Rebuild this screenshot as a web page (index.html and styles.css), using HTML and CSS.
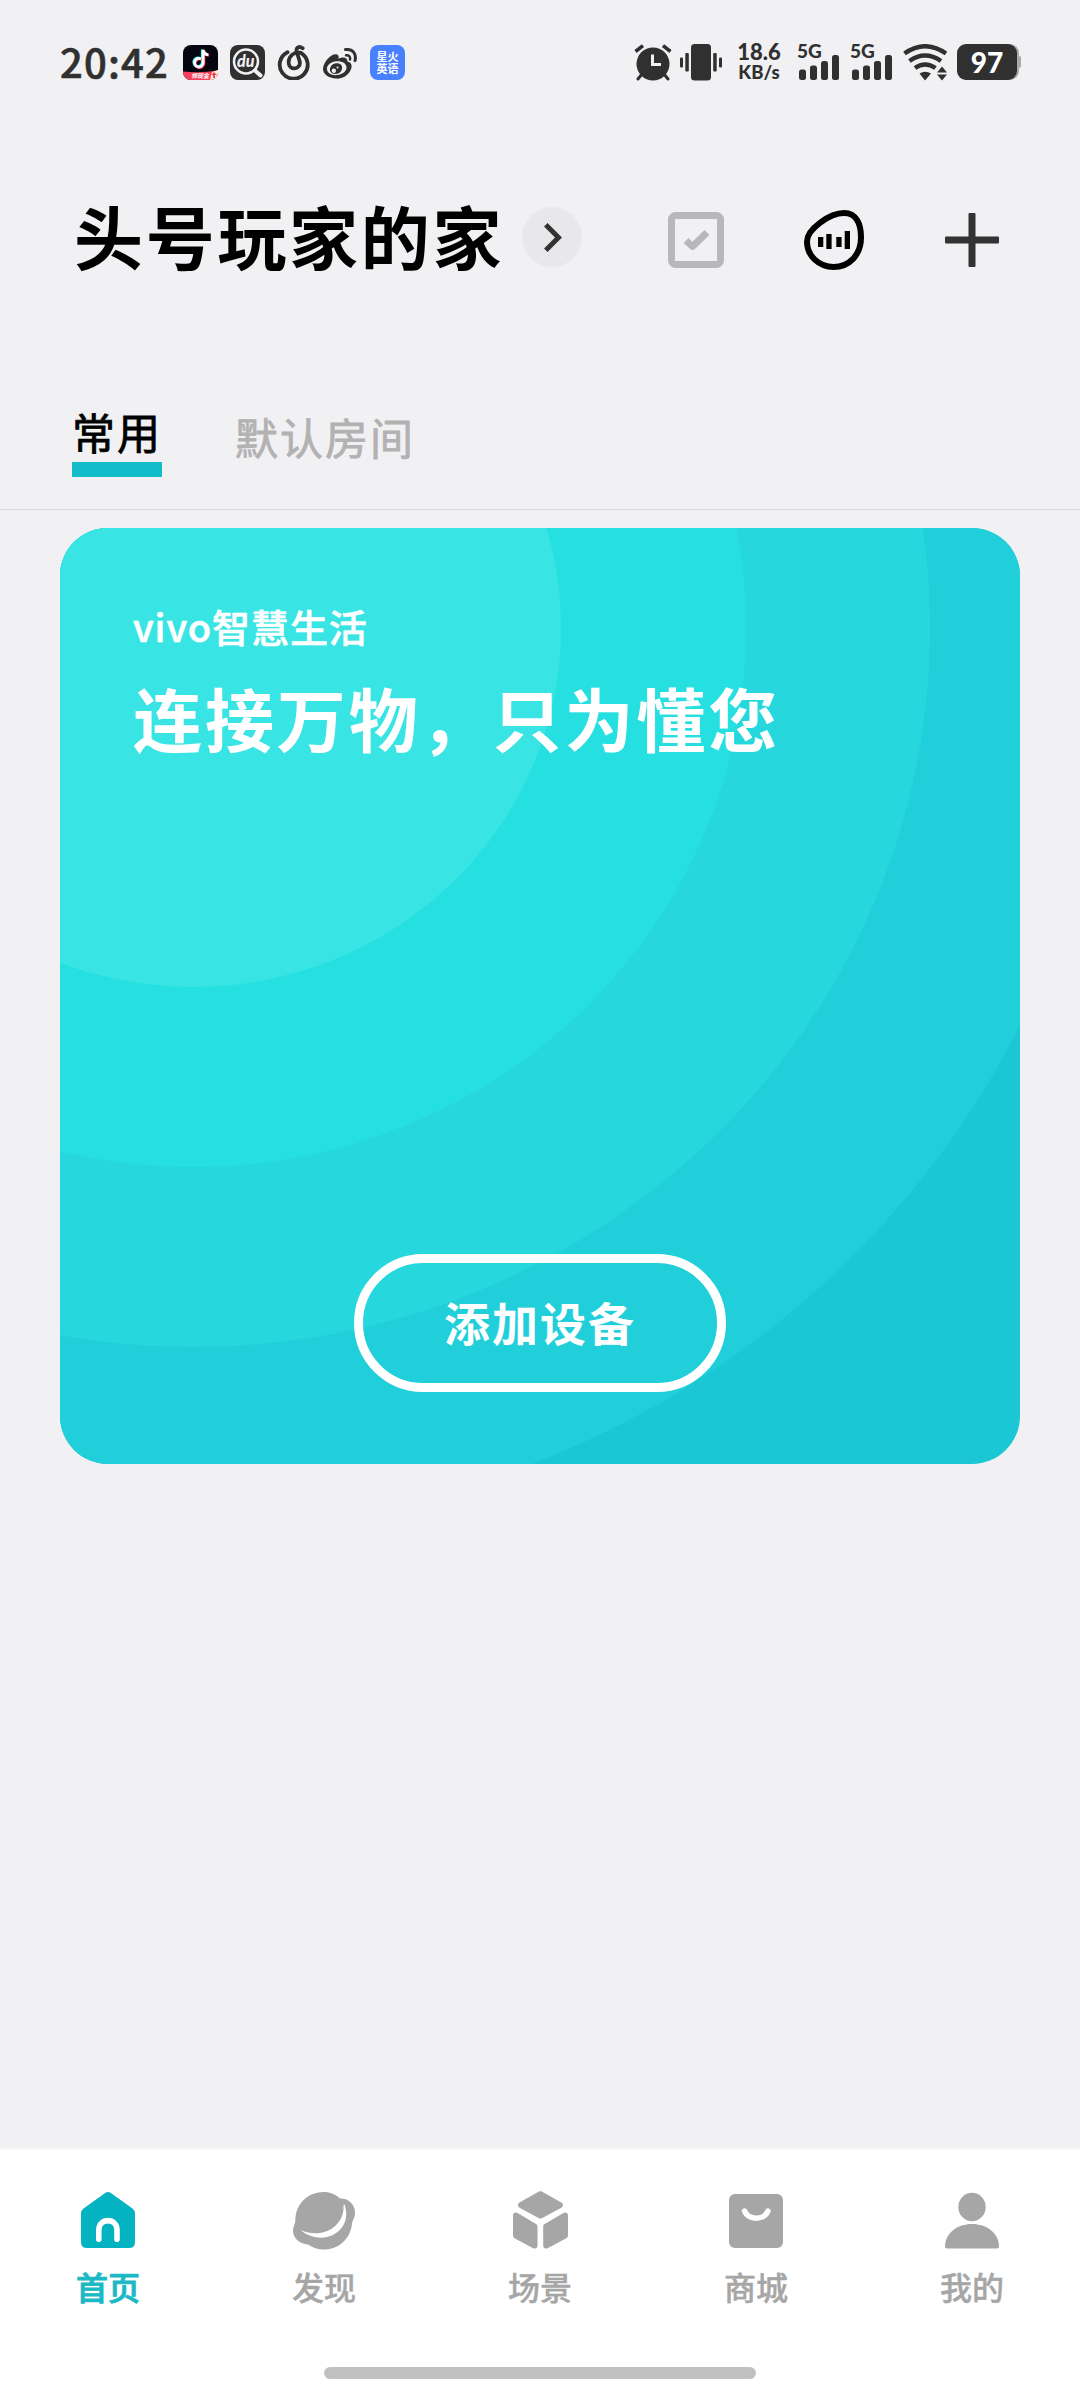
FILE: index.html
```
<!DOCTYPE html>
<html lang="zh-CN">
<head>
  <meta charset="UTF-8" />
  <meta name="viewport" content="width=device-width, initial-scale=1.0" />
  <title>智慧生活</title>
  <link rel="stylesheet" href="styles.css">
</head>
<body>
  <div class="screen">
    <div class="status-bar">
      <span class="clock">20:42</span>
      <div class="notifications">
        <div class="app-icon tiktok">
          <svg width="35" height="35" viewBox="0 0 35 35">
            <g fill="none" stroke-width="2.8">
              <path stroke="#25f4ee" d="M17.2 13.4a4.3 4.3 0 1 0 2.1 4V4.6c.5 3 2.5 4.6 5.2 4.8" />
              <path stroke="#fe2c55" d="M18.8 14.6a4.3 4.3 0 1 0 2.1 4V5.4c.5 3 2.5 4.6 5.2 4.8" />
              <path stroke="#fff" d="M18 14a4.3 4.3 0 1 0 2.1 4V5c.5 3 2.5 4.6 5.2 4.8" />
            </g>
            <path fill="#f8405a" d="M0 26.5q17 2 35-1V35H0z" />
            <path fill="#fff0d8" d="M29 27l6-2v7l-3 3h-5z" />
            <path fill="#f8405a" d="M31 27l3 3h-2v3h-2v-3h-2z" />
          </svg>
          <span class="promo">领现金</span>
        </div>
        <div class="app-icon baidu">
          <svg width="35" height="35" viewBox="0 0 35 35">
            <g fill="none" stroke="#f1f1f4">
              <circle cx="16" cy="16.5" r="12" stroke-width="2.5" />
              <path d="M25 25.5l5.5 5" stroke-width="4" stroke-linecap="round" />
            </g>
          </svg>
          <span class="du">du</span>
        </div>
        <svg width="35" height="35" viewBox="0 0 35 35">
          <path fill="none" stroke="#303030" stroke-width="3.8" stroke-linecap="round" d="M10.500 7.200A14 14 0 1 0 24 7.800C17.500 6 11.200 11 11.700 18.200a5.600 5.600 0 0 0 11.200-.7C22.500 14 20.300 10 19.600 5.800 19.200 2 22.500 1 25.700 3.200" />
        </svg>
        <svg class="weibo" width="36" height="35" viewBox="0 0 36 35">
          <path fill="#303030" fill-rule="evenodd" d="M15 9.500c2 .6 2 2.500 1.300 4.300 4.200-1.800 9-2.200 9.200 2.800 3.700 1 5 3.500 3.600 7.500C26.500 31 20 34 14 33.600 6.500 33 .8 29.500 1 23.600 1.300 16.500 10.500 7.500 15 9.500zM14.500 16.200c-6 .4-9.900 4.200-9.500 8 .3 4 4.600 6.300 10 5.900 5.900-.5 9.900-4.100 9.500-8-.4-4.100-4.700-6.200-10-5.900z" />
          <path fill="#303030" fill-rule="evenodd" d="M14.800 18.200c3.900 0 6 2.400 5.200 5.700-.8 3.400-3.600 5.200-6.900 5.100-3.700-.1-5.700-2.300-5.100-5.400.6-3.200 3.300-5.400 6.800-5.400zM11.800 23.500a2.200 2.200 0 1 0 .1 4.400 2.200 2.200 0 0 0-.1-4.400zM15.500 21.600a1 1 0 1 0 0 2 1 1 0 0 0 0-2z" />
          <g fill="none" stroke="#303030" stroke-width="3" stroke-linecap="round">
            <path d="M23.500 4.600c7-1.200 11.300 4.200 9.500 11" />
            <path d="M24 10.300c3-.4 4.700 1.500 4 4.200" stroke-width="2.500" />
          </g>
        </svg>
        <div class="app-icon spark">
          <span>星火</span>
          <span>英语</span>
        </div>
      </div>
      <div class="system">
        <svg width="38" height="37" viewBox="0 0 38 37">
          <g fill="none" stroke="#303030" stroke-width="3.600">
            <path d="M1.500 7.500 9 1.700M29 1.700l7.500 5.800" />
            <path d="M8 30l-4 5M30 30l4 5" stroke-linecap="round" stroke-width="3" />
          </g>
          <circle cx="19" cy="20" r="16.500" fill="#303030" />
          <path d="M18.500 10.500v10h8.500" fill="none" stroke="#f1f1f4" stroke-width="3" />
        </svg>
        <svg class="vibrate" width="42" height="37" viewBox="0 0 42 37" fill="#303030">
          <rect x="11" y="0" width="20" height="36.500" rx="3.500" />
          <rect x="5.300" y="9" width="3.500" height="18.500" rx="1" />
          <rect x="0" y="13.500" width="3" height="10" rx="1" />
          <rect x="33.200" y="9" width="3.500" height="18.500" rx="1" />
          <rect x="39" y="13.500" width="3" height="10" rx="1" />
        </svg>
        <div class="speed">
          <span class="rate">18.6</span>
          <span class="unit">KB/s</span>
        </div>
        <div class="signal">
          <span class="net">5G</span>
          <svg width="41" height="25" viewBox="0 0 41 25" fill="#303030">
            <rect x="0" y="14.500" width="7" height="10.500" rx="2.500" />
            <rect x="11" y="10.500" width="7" height="14.500" rx="2.500" />
            <rect x="22" y="6" width="7" height="19" rx="2.500" />
            <rect x="33" y="0" width="7" height="25" rx="2.500" />
          </svg>
        </div>
        <div class="signal">
          <span class="net">5G</span>
          <svg width="41" height="25" viewBox="0 0 41 25" fill="#303030">
            <rect x="0" y="14.500" width="7" height="10.500" rx="2.500" />
            <rect x="11" y="10.500" width="7" height="14.500" rx="2.500" />
            <rect x="22" y="6" width="7" height="19" rx="2.500" />
            <rect x="33" y="0" width="7" height="25" rx="2.500" />
          </svg>
        </div>
        <svg class="wifi" width="45" height="37" viewBox="0 0 45 37">
          <g fill="none" stroke="#303030" stroke-width="4.500">
            <path d="M1.500 9.500Q22 -5 43 9.500" />
            <path d="M6.500 17Q22 6 38 17" />
            <path d="M12 24Q22 17 32.500 24" />
          </g>
          <path fill="#303030" d="M16.500 29.500q5.700-3.500 11.500 0L22 36.500zM34 28.500l5-6 5 6zM34 30.500h10l-5 6z" />
        </svg>
        <div class="battery"><span class="level">97</span></div>
      </div>
    </div>

    <div class="header">
      <h1 class="home-name">头号玩家的家</h1>
      <div class="switch-home">
        <svg width="18" height="29" viewBox="0 0 18 29">
          <path d="M1.800 1.800 14.500 14.500 1.800 27.200" fill="none" stroke="#333" stroke-width="5" />
        </svg>
      </div>
      <div class="actions">
        <svg width="60" height="60" viewBox="0 0 60 60">
          <rect x="5.500" y="5.500" width="49" height="49" rx="4" fill="none" stroke="#b8b8ba" stroke-width="7" />
          <path d="M20 30.500 26.500 36.500 41 22.500" fill="none" stroke="#b8b8ba" stroke-width="7" stroke-linejoin="round" />
        </svg>
        <svg width="60" height="60" viewBox="0 0 60 60">
          <path d="M40 3C53 3 57 15 57 27.500 57 45 45 57 29.500 57 15 57 3 46 3 31.500 3 19 26 3 40 3z" fill="none" stroke="#000" stroke-width="6" />
          <path d="M14 27h5.300v10H14zM22.300 24h5.300v15h-5.300zM32.300 27h5.300v10h-5.300zM40.700 21H46v18h-5.300z" />
        </svg>
        <svg width="60" height="60" viewBox="0 0 60 60" fill="#333">
          <rect x="3" y="26.500" width="54" height="7" rx="1" />
          <rect x="26.500" y="3" width="7" height="54" rx="1" />
        </svg>
      </div>
    </div>

    <div class="tabs">
      <div class="tab active">常用</div>
      <div class="tab">默认房间</div>
    </div>

    <div class="card">
      <svg class="card-bg" width="960" height="936" viewBox="0 0 960 936">
        <rect width="960" height="936" fill="#1bc7d4" />
        <ellipse cx="133" cy="100" rx="922" ry="899" fill="#21cfdb" />
        <ellipse cx="133" cy="100" rx="737" ry="719" fill="#26d8de" />
        <ellipse cx="133" cy="100" rx="553" ry="539" fill="#26dfe0" />
        <ellipse cx="133" cy="100" rx="368" ry="359" fill="#39e5e4" />
      </svg>
      <div class="brand">vivo智慧生活</div>
      <div class="slogan">连接万物，只为懂您</div>
      <div class="add-device">添加设备</div>
    </div>

    <div class="bottom-nav">
      <div class="nav-items">
        <div class="nav-item active">
          <svg width="72" height="72" viewBox="0 0 72 72">
            <path fill="#04b3c1" d="M33.500 8.800Q36 7 38.500 8.800L60.500 24.500Q63 26.500 63 29.500V58q0 6-6 6H15q-6 0-6-6V29.500Q9 26.500 11.500 24.500z" />
            <path fill="none" stroke="#fff" stroke-width="5.600" stroke-linecap="round" d="M26.800 55.300V46c0-12.500 18.200-12.500 18.200 0v9.300" />
          </svg>
          <span>首页</span>
        </div>
        <div class="nav-item">
          <svg width="72" height="72" viewBox="0 0 72 72" fill="#a6a6a6">
            <path d="M36 8C42 8 48 10.500 52 14.500 60 14 67 20 67 28.500 67 34 64.500 36 64 40 62 56 50 65.500 36 65.500 30 65.500 24.500 63.500 20 60.500 11 59.500 5 54 5 47 5 42 7.500 40 7.300 36 8 19 20 8 36 8z" />
            <path fill="#fff" d="M56.500 20.500C66 48 34 64 12.500 46 35 56 57 42 55.500 21z" />
          </svg>
          <span>发现</span>
        </div>
        <div class="nav-item">
          <svg width="72" height="72" viewBox="0 0 72 72">
            <g fill="#a6a6a6" stroke="#a6a6a6" stroke-width="6" stroke-linejoin="round">
              <path d="M36.400 10.200 55.800 21 36.400 31.500 17 21z" />
              <path d="M12 31.500 30.500 42.500V61.500L12 51.500z" />
              <path d="M61 31.500 42.200 42.500V61.500L61 51.500z" />
            </g>
          </svg>
          <span>场景</span>
        </div>
        <div class="nav-item">
          <svg width="72" height="72" viewBox="0 0 72 72">
            <rect x="9" y="10" width="54" height="54" rx="6" fill="#a6a6a6" />
            <path d="M24.500 27C28 36.500 44.500 36.500 48 27" fill="none" stroke="#fff" stroke-width="5.500" stroke-linecap="round" />
          </svg>
          <span>商城</span>
        </div>
        <div class="nav-item">
          <svg width="72" height="72" viewBox="0 0 72 72" fill="#a6a6a6">
            <ellipse cx="36" cy="23" rx="13.700" ry="14.300" />
            <path d="M9 62C9.500 49 21 40 36 40S62.500 49 63 62q0 2.500-2 2.500H11q-2 0-2-2.500z" />
          </svg>
          <span>我的</span>
        </div>
      </div>
      <div class="home-indicator"></div>
    </div>
  </div>
</body>
</html>
```

FILE: styles.css
```
* {
  box-sizing: border-box;
}

body {
  margin: 0;
  background-color: #f1f1f4;
  font-family: "Noto Sans CJK SC", sans-serif;
  color: #000;
}

svg {
  display: block;
  flex: none;
}

.screen {
  width: 1080px;
  height: 2400px;
  display: flex;
  flex-direction: column;
  overflow: hidden;
}

/* status bar */
.status-bar {
  height: 124px;
  padding: 0 60px;
  display: flex;
  align-items: center;
  color: #303030;
}

.clock {
  width: 123px;
  margin-top: -3px;
  font-size: 40px;
  font-weight: 500;
  letter-spacing: 1.2px;
  line-height: 60px;
  -webkit-text-stroke: 0.6px #303030;
}

.notifications {
  display: flex;
  gap: 12px;
}

.weibo {
  margin-left: -2px;
}

.app-icon {
  width: 35px;
  height: 35px;
  border-radius: 8px;
  overflow: hidden;
  position: relative;
}

.tiktok {
  background-color: #050510;
}

.promo {
  position: absolute;
  left: 8px;
  bottom: 0;
  font-size: 6px;
  line-height: 8px;
  font-style: italic;
  font-weight: bold;
  color: #fff;
}

.baidu {
  background-color: #303030;
}

.du {
  position: absolute;
  left: 7px;
  top: 7px;
  font-family: Lato, sans-serif;
  font-size: 16px;
  line-height: 18px;
  font-style: italic;
  font-weight: 900;
  color: #f1f1f4;
}

.spark {
  display: flex;
  flex-direction: column;
  align-items: center;
  justify-content: center;
  gap: 1px;
  background-color: #4880ff;
  color: #fff;
  font-size: 11px;
  font-weight: bold;
  line-height: 11px;
}

.system {
  margin-left: auto;
  display: flex;
  align-items: center;
}

.vibrate {
  margin-left: 8px;
}

.speed {
  width: 46px;
  margin: 0 15px 0 14px;
  display: flex;
  flex-direction: column;
  align-items: center;
  font-family: Lato, sans-serif;
  font-weight: 900;
  line-height: 20px;
}

.rate {
  font-size: 22px;
}

.unit {
  font-size: 18.5px;
}

.signal {
  width: 53px;
  height: 36px;
  display: flex;
  flex-direction: column;
  position: relative;
}

.signal svg {
  margin: 11px 0 0 2px;
}

.net {
  position: absolute;
  left: 0;
  top: -1px;
  font-family: Lato, sans-serif;
  font-size: 19px;
  font-weight: 900;
  line-height: 16px;
}

.battery {
  width: 60px;
  height: 36px;
  margin: 0 3px 0 9px;
  border-radius: 9px;
  background-color: #303030;
  box-shadow: 2px 0 0 #a9a9ab;
  color: #fff;
  display: flex;
  align-items: center;
  justify-content: center;
  position: relative;
}

.battery::after {
  content: "";
  position: absolute;
  right: -4px;
  top: 12px;
  width: 3px;
  height: 12px;
  border-radius: 0 2px 2px 0;
  background-color: #a9a9ab;
}

.level {
  font-family: Lato, sans-serif;
  font-size: 28px;
  font-weight: 900;
  line-height: 36px;
}

/* header */
.header {
  height: 226px;
  padding: 0 78px 0 74px;
  display: flex;
  align-items: center;
}

.home-name {
  margin: -5px 0 0;
  font-size: 69px;
  font-weight: bold;
  letter-spacing: 2.7px;
  line-height: 100px;
}

.switch-home {
  width: 60px;
  height: 60px;
  margin-left: 18px;
  padding-left: 2px;
  border-radius: 50%;
  background-color: #e8e8ea;
  display: flex;
  align-items: center;
  justify-content: center;
}

.actions {
  margin-left: auto;
  padding-top: 5px;
  display: flex;
  gap: 78px;
}

/* tabs */
.tabs {
  height: 160px;
  padding: 49px 72px 0;
  border-bottom: 1px solid #dadadc;
  display: flex;
  align-items: flex-start;
  gap: 73px;
}

.tab {
  padding-top: 5px;
  color: #b2b2b2;
  font-size: 43px;
  letter-spacing: 2px;
  line-height: 64px;
  -webkit-text-stroke: 0.8px currentColor;
}

.tab.active {
  padding-top: 0;
  height: 78px;
  border-bottom: 15px solid #12bccb;
  color: #000;
}

/* card */
.card {
  width: 960px;
  height: 936px;
  margin: 18px 60px 0;
  padding: 68px 73px 72px;
  border-radius: 48px;
  overflow: hidden;
  display: flex;
  flex-direction: column;
  position: relative;
  color: #fff;
}

.card-bg {
  position: absolute;
  left: 0;
  top: 0;
  z-index: -1;
}

.brand {
  font-size: 38px;
  font-weight: 500;
  letter-spacing: 0.9px;
  line-height: 60px;
  -webkit-text-stroke: 0.6px #fff;
}

.slogan {
  margin-top: 11px;
  font-size: 69px;
  font-weight: bold;
  letter-spacing: 2.900px;
  line-height: 100px;
  white-space: nowrap;
}

.add-device {
  width: 372px;
  height: 138px;
  margin: auto auto 0;
  border: 9px solid #fff;
  border-radius: 69px;
  font-size: 46px;
  font-weight: bold;
  letter-spacing: 2px;
  line-height: 117px;
  text-align: center;
}

/* bottom navigation */
.bottom-nav {
  height: 252px;
  margin-top: auto;
  border-top: 2px solid #f9f9fa;
  background-color: #fff;
  display: flex;
  flex-direction: column;
  align-items: center;
}

.nav-items {
  width: 100%;
  padding-top: 34px;
  display: flex;
}

.nav-item {
  flex: 1;
  display: flex;
  flex-direction: column;
  align-items: center;
  color: #a6a6a6;
  font-size: 32px;
  font-weight: 500;
  line-height: 48px;
  -webkit-text-stroke: 0.4px currentColor;
}

.nav-item span {
  margin-top: 6px;
}

.nav-item.active {
  color: #1bb9c6;
  -webkit-text-stroke: 0.9px currentColor;
}

.home-indicator {
  width: 432px;
  height: 12px;
  margin: auto 0 21px;
  border-radius: 6px;
  background-color: #c1c1c1;
}
```
